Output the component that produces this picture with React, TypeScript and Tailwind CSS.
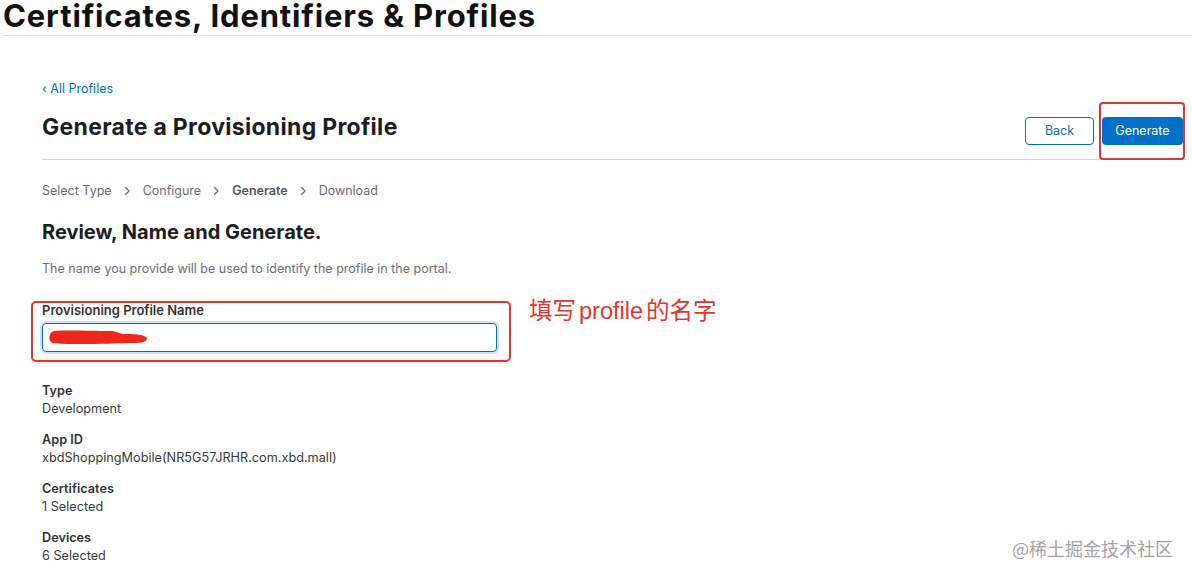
import React from 'react';

const font = { fontFamily: 'Inter, "Noto Sans", "Liberation Sans", sans-serif' };

function Chevron() {
  return (
    <svg width="7" height="10" viewBox="0 0 7 10" className="text-[#6e6e73]">
      <path d="M1.5 1.5 L5 5 L1.5 8.5" fill="none" stroke="currentColor" strokeWidth="1.2" strokeLinecap="round" strokeLinejoin="round" />
    </svg>
  );
}

const details = [
  { label: 'Type', value: 'Development' },
  { label: 'App ID', value: 'xbdShoppingMobile(NR5G57JRHR.com.xbd.mall)' },
  { label: 'Certificates', value: '1 Selected' },
  { label: 'Devices', value: '6 Selected' },
];

export default function App() {
  return (
    <div className="relative w-[1192px] h-[576px] overflow-hidden bg-white text-[#1d1d1f]" style={font}>
      <div className="h-[36px] border-b border-[#e2e2e2] ml-[3px]">
        <h1 className="text-[31px] leading-[32px] font-bold tracking-[0.85px] text-[#111]">
          Certificates, Identifiers &amp; Profiles
        </h1>
      </div>

      <div className="pl-[42px] pr-[6px]">
        <div className="mt-[44px] text-[12.5px] leading-[18px] text-[#0070c9]">‹ All Profiles</div>

        <div className="mt-[15px] flex items-start justify-between border-b border-[#d6d6d6] pb-[14px]">
          <h2 className="text-[23px] leading-[28px] font-bold tracking-[0.3px] text-[#1d1d1f]">
            Generate a Provisioning Profile
          </h2>
          <div className="mt-[4px] mr-[3px] flex gap-[8px]">
            <button className="h-[28px] w-[69px] rounded-[4px] border border-[#0070c9] bg-white text-[12.5px] text-[#0070c9]">
              Back
            </button>
            <div className="relative">
              <button className="h-[28px] w-[81px] rounded-[4px] bg-[#0070c9] text-[12.5px] text-white">
                Generate
              </button>
              <div className="absolute -top-[15px] -bottom-[15px] -left-[3px] -right-[2px] rounded-[4px] border-2 border-[#e8332b]" />
            </div>
          </div>
        </div>

        <div className="mt-[22px] flex items-center gap-[12px] text-[12.5px] leading-[18px] text-[#6e6e73]">
          <span>Select Type</span>
          <Chevron />
          <span>Configure</span>
          <Chevron />
          <span className="font-semibold text-[#555]">Generate</span>
          <Chevron />
          <span>Download</span>
        </div>

        <h3 className="mt-[20px] text-[20px] leading-[24px] font-bold text-[#1d1d1f]">Review, Name and Generate.</h3>

        <p className="mt-[17px] text-[12.5px] leading-[16px] text-[#6e6e73]">
          The name you provide will be used to identify the profile in the portal.
        </p>

        <div className="mt-[25px] flex items-start">
          <div className="relative w-[455px]">
            <div className="text-[13px] leading-[16px] font-semibold text-[#333]">Provisioning Profile Name</div>
            <div className="mt-[5px] h-[29px] rounded-[4px] border border-[#0070c9] ring-2 ring-[#cfe3f5] flex items-center pl-[5px]">
              <svg width="100" height="15" viewBox="0 0 100 15">
                <path
                  d="M6 1 C20 0 45 1 62 1 C68 1 70 3 74 4 C85 4 96 4 99 8 C99 12 94 13 85 13 C70 13 60 14 40 14 C25 14 10 14 5 13 C0 12 0 3 6 1 Z"
                  fill="#f0251c"
                />
              </svg>
            </div>
            <div className="absolute -top-[1px] -left-[11px] -right-[14px] -bottom-[10px] rounded-[5px] border-2 border-[#e8332b]" />
          </div>
          <div
            className="ml-[32px] -mt-[5px] flex items-baseline text-[23.5px] leading-[28px] text-[#e8332b]"
            style={{ fontFamily: '"Liberation Sans", "Noto Sans CJK SC", sans-serif' }}
          >
            <span>填写</span>
            <span className="mx-[3px]">profile</span>
            <span>的名字</span>
          </div>
        </div>

        <div className="mt-[30px] flex flex-col gap-[13px]">
          {details.map((d) => (
            <div key={d.label} className="text-[12.7px] leading-[18px]">
              <div className="font-semibold text-[#333]">{d.label}</div>
              <div className="text-[#3a3a3a]">{d.value}</div>
            </div>
          ))}
        </div>
      </div>

      <div
        className="absolute right-[19px] top-[537px] text-[18px] leading-[22px] text-[#a3a3a3]"
        style={{ fontFamily: '"Noto Sans CJK SC", "Noto Sans", sans-serif' }}
      >
        @稀土掘金技术社区
      </div>
    </div>
  );
}
